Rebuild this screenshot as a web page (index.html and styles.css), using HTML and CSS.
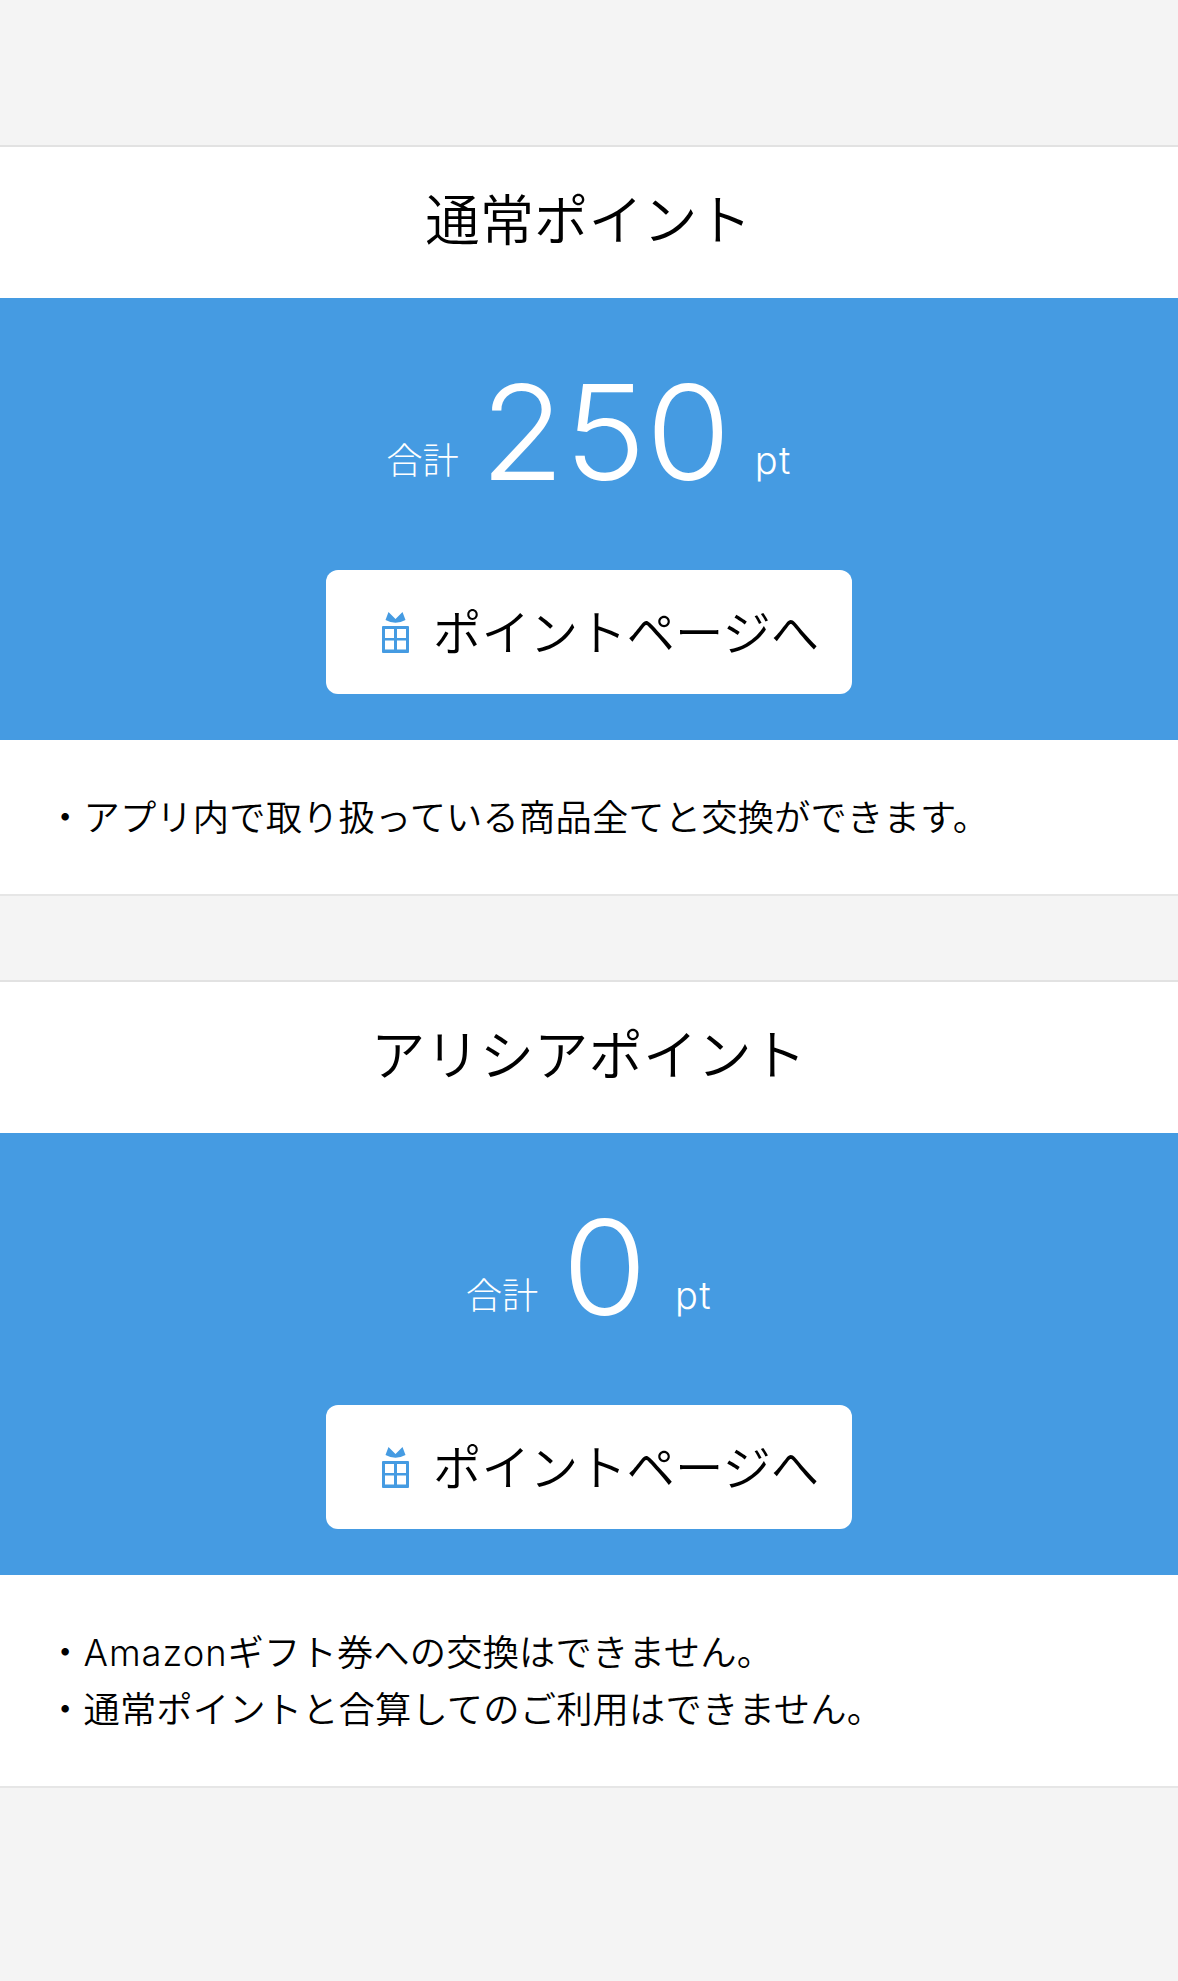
FILE: index.html
```
<!DOCTYPE html>
<html lang="ja">
<head>
  <meta charset="utf-8">
  <title>ポイント</title>
  <link rel="stylesheet" href="styles.css">
</head>
<body>

  <section class="card">
    <h2>通常ポイント</h2>
    <div class="total">
      <p class="amount"><span class="label">合計</span><span class="num">250</span><span class="unit">pt</span></p>
      <a class="btn" href="#">
        <svg class="gift" viewBox="0 0 27 41">
          <path d="M6.5 0L13.5 7L20.5 0L23.5 8Q13.5 13.5 3.5 8Z"/>
          <path fill-rule="evenodd" d="M1 14H26Q27 14 27 15V40Q27 41 26 41H1Q0 41 0 40V15Q0 14 1 14ZM3 17V26H12V17ZM15 17V26H24V17ZM3 28.5V37.5H12V28.5ZM15 28.5V37.5H24V28.5Z"/>
        </svg>
        <span class="text">ポイントページへ</span>
      </a>
    </div>
    <ul class="notes">
      <li>・アプリ内で取り扱っている商品全てと交換ができます。</li>
    </ul>
  </section>

  <section class="card">
    <h2>アリシアポイント</h2>
    <div class="total">
      <p class="amount"><span class="label">合計</span><span class="num">0</span><span class="unit">pt</span></p>
      <a class="btn" href="#">
        <svg class="gift" viewBox="0 0 27 41">
          <path d="M6.5 0L13.5 7L20.5 0L23.5 8Q13.5 13.5 3.5 8Z"/>
          <path fill-rule="evenodd" d="M1 14H26Q27 14 27 15V40Q27 41 26 41H1Q0 41 0 40V15Q0 14 1 14ZM3 17V26H12V17ZM15 17V26H24V17ZM3 28.5V37.5H12V28.5ZM15 28.5V37.5H24V28.5Z"/>
        </svg>
        <span class="text">ポイントページへ</span>
      </a>
    </div>
    <ul class="notes">
      <li>・<span class="latin">Amazon</span>ギフト券への交換はできません。</li>
      <li>・通常ポイントと合算してのご利用はできません。</li>
    </ul>
  </section>

</body>
</html>
```
FILE: styles.css
```
* {
  box-sizing: border-box;
}
body {
  margin: 0;
  padding-top: 145px;
  background-color: #f4f4f4;
  color: #000;
  font-family: "Noto Sans CJK JP", sans-serif;
  font-weight: 350;
  font-size: 36.3px;
}
.card {
  margin-bottom: 84px;
  background-color: #fff;
  border-top: 2px solid #e2e2e2;
  border-bottom: 2px solid #e6e6e6;
}
h2 {
  height: 151px;
  margin: 0;
  padding-right: 1px;
  font-size: 54.4px;
  font-weight: 350;
  line-height: 140px;
  text-align: center;
}
.total {
  display: flex;
  flex-direction: column;
  align-items: center;
  height: 442px;
  padding-top: 60px;
  background-color: #459be2;
}
.amount {
  display: flex;
  align-items: flex-start;
  height: 212px;
  margin: 0;
  color: #fff;
  font-weight: 300;
  line-height: 130px;
}
.label, .unit {
  padding-top: 35px;
}
.num {
  margin: 0 29px 0 26px;
  font-family: Inter, sans-serif;
  font-size: 132px;
  line-height: 148px;
  transform: scaleX(1.04);
}
.unit, .latin {
  font-family: Inter, sans-serif;
  font-weight: 300;
}
.unit {
  padding-top: 37px;
  font-size: 38px;
  letter-spacing: 1.5px;
}
.btn {
  display: flex;
  align-items: center;
  width: 526px;
  height: 124px;
  padding-left: 56px;
  border-radius: 12px;
  background-color: #fff;
  color: #000;
  font-size: 48.4px;
  font-weight: 350;
  text-decoration: none;
}
.btn .text {
  padding-bottom: 4px;
}
.gift {
  width: 27px;
  height: 41px;
  margin-right: 24px;
  fill: #459be2;
}
.notes {
  margin: 0;
  padding: 47px 0 50px 47px;
  list-style: none;
  line-height: 57px;
  letter-spacing: 0.15px;
}
.latin {
  line-height: 1;
  letter-spacing: 1px;
}
```
